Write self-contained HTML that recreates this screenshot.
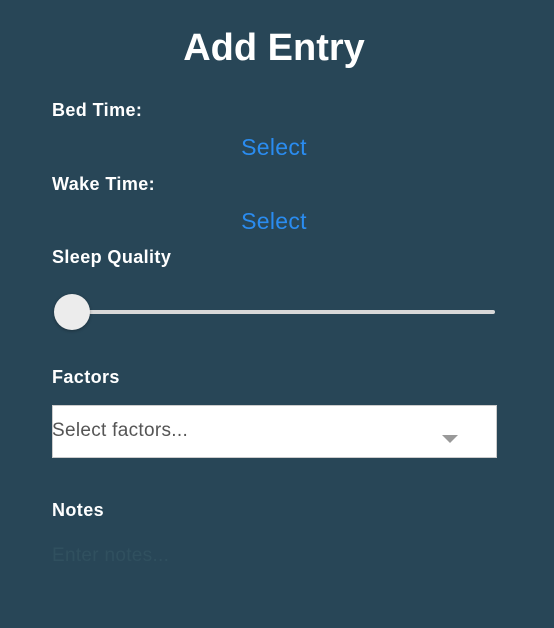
<!DOCTYPE html>
<html><head><style>
body{margin:0;width:554px;height:628px;background:#284657;font-family:"Liberation Sans",sans-serif;position:relative;overflow:hidden}
.a{position:absolute;white-space:nowrap}
.l{left:52px;color:#fff;font-size:18px;font-weight:bold;line-height:20px;letter-spacing:.4px}
.s{left:0;width:548px;text-align:center;color:#2a8cf0;font-size:23px;line-height:26px;letter-spacing:.3px}
</style></head><body>
<div class="a" style="left:0;width:548px;text-align:center;top:26px;color:#fff;font-size:38px;font-weight:bold;line-height:44px">Add Entry</div>
<div class="a l" style="top:100px">Bed Time:</div>
<div class="a s" style="top:134px">Select</div>
<div class="a l" style="top:174px">Wake Time:</div>
<div class="a s" style="top:208px">Select</div>
<div class="a l" style="top:247px">Sleep Quality</div>
<div class="a" style="left:70px;top:310px;width:425px;height:4px;border-radius:2px;background:#d8d8d8"></div>
<div class="a" style="left:54px;top:294px;width:36px;height:36px;border-radius:50%;background:#ececec;box-shadow:0 1px 3px rgba(0,0,0,.3)"></div>
<div class="a l" style="top:367px">Factors</div>
<div class="a" style="left:52px;top:405px;width:445px;height:53px;background:#fff;border:1px solid #ccc;box-sizing:border-box"></div>
<div class="a" style="left:52px;top:420px;color:#555;font-size:19px;line-height:22px;letter-spacing:.3px">Select factors...</div>
<div class="a" style="left:442px;top:435px;width:0;height:0;border-left:8px solid transparent;border-right:8px solid transparent;border-top:8px solid #999"></div>
<div class="a l" style="top:500px">Notes</div>
<div class="a" style="left:52px;top:545px;color:#30505f;font-size:19px;line-height:22px;letter-spacing:.3px">Enter notes...</div>
</body></html>
